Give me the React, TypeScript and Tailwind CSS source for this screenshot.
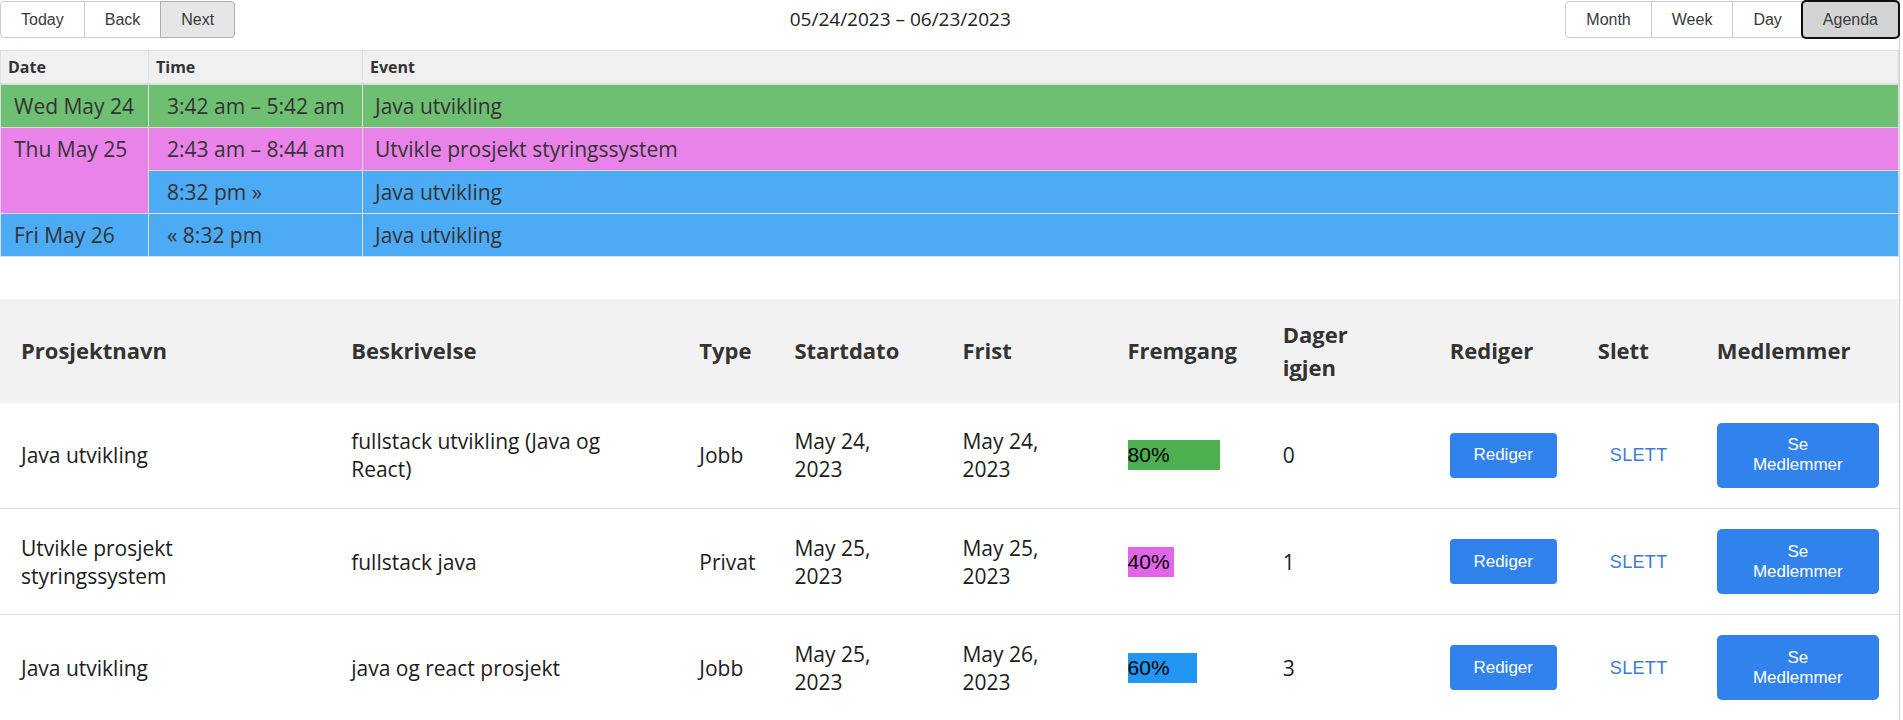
import React from 'react';

type AgendaRow = {
  date?: string;
  dateSpan?: number;
  dateColor?: string;
  time: string;
  title: string;
  color: string;
};

type Prosjekt = {
  navn: string;
  beskrivelse: string;
  type: string;
  start: string;
  frist: string;
  fremgang: number;
  bar: string;
  dager: number;
};

const agenda: AgendaRow[] = [
  { date: 'Wed May 24', dateColor: 'bg-[#6fbf73]', time: '3:42 am – 5:42 am', title: 'Java utvikling', color: 'bg-[#6fbf73]' },
  { date: 'Thu May 25', dateSpan: 2, dateColor: 'bg-[#e983ea]', time: '2:43 am – 8:44 am', title: 'Utvikle prosjekt styringssystem', color: 'bg-[#e983ea]' },
  { time: '8:32 pm »', title: 'Java utvikling', color: 'bg-[#4dabf5]' },
  { date: 'Fri May 26', dateColor: 'bg-[#4dabf5]', time: '« 8:32 pm', title: 'Java utvikling', color: 'bg-[#4dabf5]' },
];

const prosjekter: Prosjekt[] = [
  { navn: 'Java utvikling', beskrivelse: 'fullstack utvikling (Java og React)', type: 'Jobb', start: 'May 24, 2023', frist: 'May 24, 2023', fremgang: 80, bar: 'bg-[#4caf50]', dager: 0 },
  { navn: 'Utvikle prosjekt styringssystem', beskrivelse: 'fullstack java', type: 'Privat', start: 'May 25, 2023', frist: 'May 25, 2023', fremgang: 40, bar: 'bg-[#e066e6]', dager: 1 },
  { navn: 'Java utvikling', beskrivelse: 'java og react prosjekt', type: 'Jobb', start: 'May 25, 2023', frist: 'May 26, 2023', fremgang: 60, bar: 'bg-[#2196f3]', dager: 3 },
];

const kolonner = ['Prosjektnavn', 'Beskrivelse', 'Type', 'Startdato', 'Frist', 'Fremgang', 'Dager igjen', 'Rediger', 'Slett', 'Medlemmer'];
const bredder = [330, 348, 95, 168, 165, 155, 167, 148, 119, 203];

function ToolbarButton({ label, first, last, active, focused }: { label: string; first?: boolean; last?: boolean; active?: boolean; focused?: boolean }) {
  const base = 'h-[37px] px-[20px] border text-[16px] text-[#373a3c] -ml-px first:ml-0';
  const shape = first ? ' rounded-l-[4px]' : last ? ' rounded-r-[4px]' : '';
  const state = focused
    ? ' bg-[#d4d4d4] border-[#8c8c8c] outline-2 outline-[#111] -outline-offset-1 rounded-[4px] relative'
    : active
      ? ' bg-[#e6e6e6] border-[#adadad] relative'
      : ' bg-white border-[#ccc]';
  return <button type="button" className={base + shape + state}>{label}</button>;
}

function Toolbar() {
  return (
    <div className="mb-[12px] flex h-[38px] items-start pt-px font-['Liberation_Sans',Arial,sans-serif]">
      <div className="flex">
        <ToolbarButton label="Today" first />
        <ToolbarButton label="Back" />
        <ToolbarButton label="Next" last active />
      </div>
      <div className="flex-1 px-[10px] pt-[5px] text-center font-['Open_Sans',sans-serif] text-[19px] leading-[26px] text-[#222]">05/24/2023 – 06/23/2023</div>
      <div className="flex">
        <ToolbarButton label="Month" first />
        <ToolbarButton label="Week" />
        <ToolbarButton label="Day" />
        <ToolbarButton label="Agenda" last focused />
      </div>
    </div>
  );
}

function AgendaTable() {
  return (
    <table className="w-full table-fixed border-collapse border border-[#ddd] font-['Open_Sans',sans-serif] text-[#333]">
      <colgroup>
        <col className="w-[148px]" />
        <col className="w-[214px]" />
        <col />
      </colgroup>
      <thead>
        <tr className="bg-[#f0f0f0]">
          <th className="h-[33px] border-b-2 border-[#ddd] pl-[7px] text-left text-[16px] font-bold">Date</th>
          <th className="h-[33px] border-b-2 border-l border-[#ddd] pl-[7px] text-left text-[16px] font-bold">Time</th>
          <th className="h-[33px] border-b-2 border-l border-[#ddd] pl-[7px] text-left text-[16px] font-bold">Event</th>
        </tr>
      </thead>
      <tbody className="text-[21px]">
        {agenda.map((row, i) => (
          <tr key={i}>
            {row.date ? (
              <td rowSpan={row.dateSpan ?? 1} className={`h-[43px] border-t border-[#ddd] pl-[13px] align-top leading-[42px] ${row.dateColor}`}>{row.date}</td>
            ) : null}
            <td className={`h-[43px] border-t border-l border-[#ddd] pl-[18px] leading-[42px] ${row.color}`}>{row.time}</td>
            <td className={`h-[43px] border-t border-l border-[#ddd] pl-[12px] leading-[42px] ${row.color}`}>{row.title}</td>
          </tr>
        ))}
      </tbody>
    </table>
  );
}

function ProsjektTabell() {
  return (
    <table className="mt-[42px] w-full table-fixed border-collapse font-['Open_Sans',sans-serif]">
      <colgroup>
        {bredder.map((b, i) => <col key={i} style={{ width: b }} />)}
      </colgroup>
      <thead>
        <tr className="bg-[#f2f2f2]">
          {kolonner.map((k) => (
            <th key={k} className="h-[104px] pl-[21px] text-left align-middle text-[22px] font-bold leading-[33px] text-[#333]">
              <div className={k === 'Dager igjen' ? 'max-w-[80px]' : ''}>{k}</div>
            </th>
          ))}
        </tr>
      </thead>
      <tbody className="text-[21px] leading-[28px] text-[#1c1c1c]">
        {prosjekter.map((p, i) => (
          <tr key={i} className="border-b border-[#e0e0e0]">
            <td className="h-[106px] pl-[21px]"><div className="max-w-[250px]">{p.navn}</div></td>
            <td className="pl-[21px]"><div className="max-w-[290px]">{p.beskrivelse}</div></td>
            <td className="pl-[21px]">{p.type}</td>
            <td className="pl-[21px]"><div className="max-w-[110px]">{p.start}</div></td>
            <td className="pl-[21px]"><div className="max-w-[110px]">{p.frist}</div></td>
            <td className="pl-[21px]">
              <div className={`h-[30px] font-['Liberation_Sans',Arial,sans-serif] text-[21px] leading-[30px] text-black ${p.bar}`} style={{ width: p.fremgang * 1.15 }}>{p.fremgang}%</div>
            </td>
            <td className="pl-[21px]">{p.dager}</td>
            <td className="pl-[21px]">
              <button type="button" className="h-[45px] w-[107px] rounded-[4px] bg-[#3182ec] font-['Liberation_Sans',Arial,sans-serif] text-[17px] text-white">Rediger</button>
            </td>
            <td className="pl-[25px]">
              <button type="button" className="px-[8px] py-[6px] font-['Liberation_Sans',Arial,sans-serif] text-[18px] tracking-[0.02em] text-[#3a7cd8]">SLETT</button>
            </td>
            <td className="pl-[21px]">
              <button type="button" className="flex h-[65px] w-[162px] flex-col items-center justify-center rounded-[5px] bg-[#3182ec] font-['Liberation_Sans',Arial,sans-serif] text-[17px] leading-[20px] text-white">
                <span>Se</span>
                <span>Medlemmer</span>
              </button>
            </td>
          </tr>
        ))}
      </tbody>
    </table>
  );
}

export default function App() {
  return (
    <div className="flex min-h-[720px] bg-white">
      <main className="min-w-0 flex-1">
        <Toolbar />
        <AgendaTable />
        <ProsjektTabell />
      </main>
      <div className="w-[4px] border-l border-[#d0d0d0]" />
    </div>
  );
}
